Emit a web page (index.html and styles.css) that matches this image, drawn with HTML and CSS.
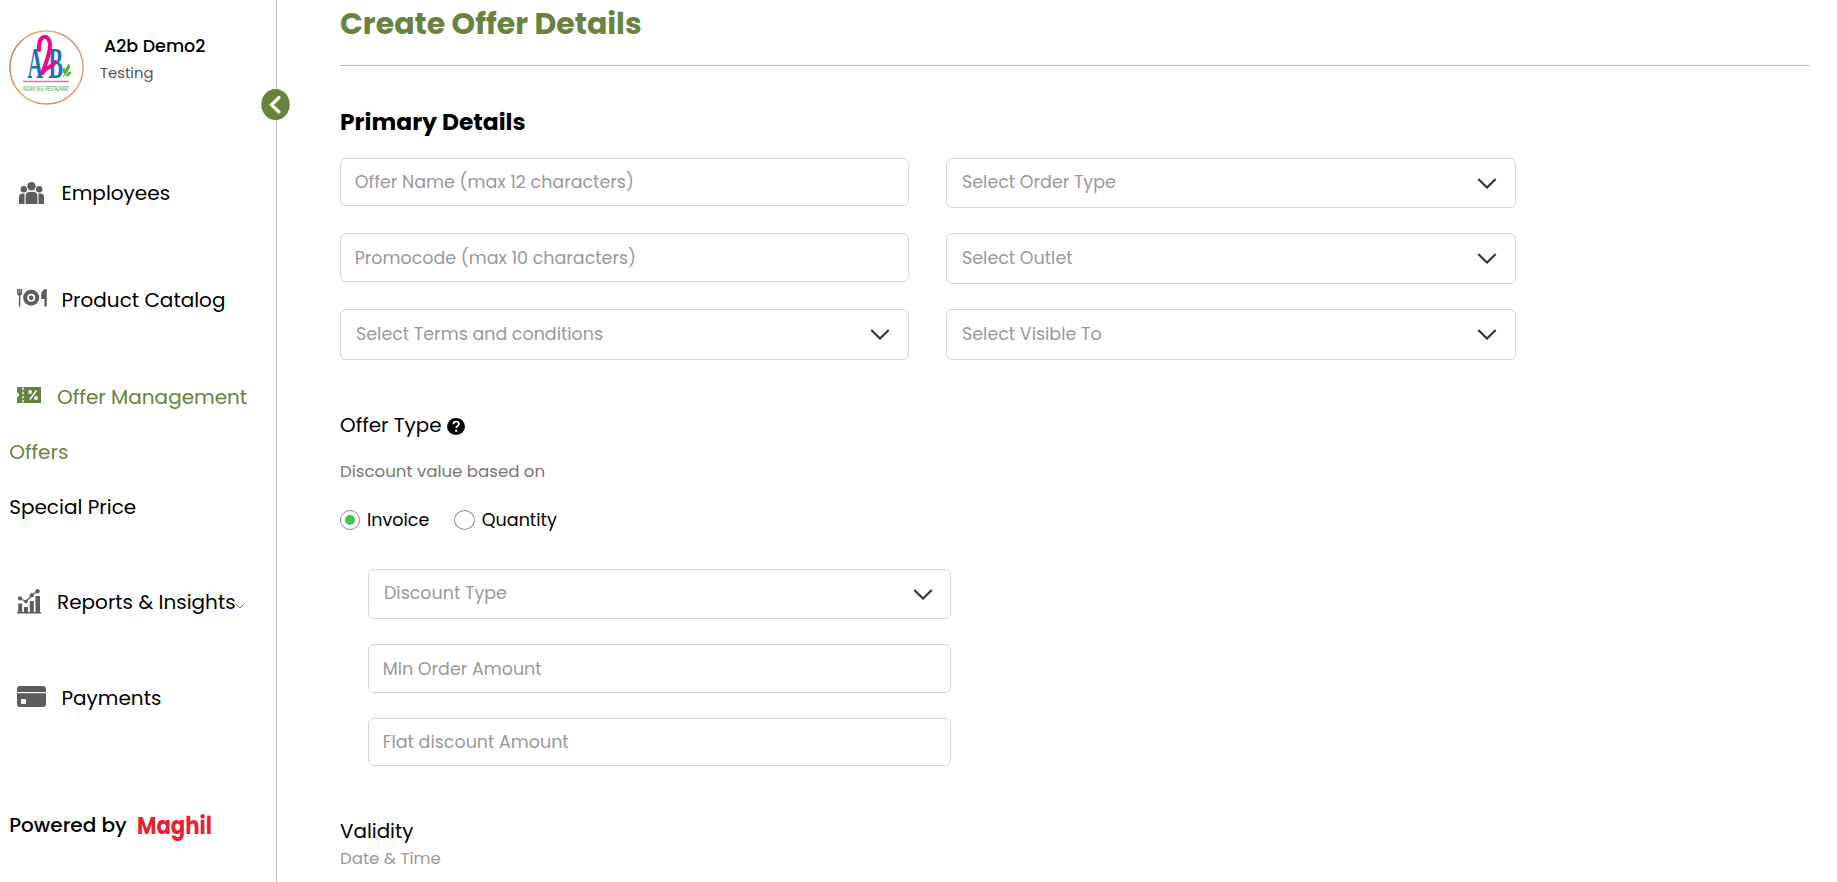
FILE: index.html
```
<!DOCTYPE html>
<html lang="en">
<head>
<meta charset="utf-8">
<title>Create Offer Details</title>
<link rel="stylesheet" href="styles.css">
</head>
<body>
<svg class="defs" width="0" height="0">
  <symbol id="chevron" viewBox="0 0 20 12"><path d="M1.3 1 10 9.6 18.7 1" fill="none" stroke="#333" stroke-width="2.1"/></symbol>
</svg>
<div class="app">
  <aside class="sidebar">
    <div class="profile">
      <svg class="avatar" viewBox="0 0 75 75" width="75" height="75">
        <defs><linearGradient id="gold" x1="0" y1="0" x2="1" y2="0.25"><stop offset="0" stop-color="#b9775c"/><stop offset=".45" stop-color="#e6bd79"/><stop offset=".75" stop-color="#cf8e62"/><stop offset="1" stop-color="#dca382"/></linearGradient></defs>
        <circle cx="37.5" cy="37.5" r="36.6" fill="#fff" stroke="url(#gold)" stroke-width="1.5"/>
        <text class="logo-serif" x="18.500" y="48" textLength="15.500" lengthAdjust="spacingAndGlyphs">A</text>
        <text class="logo-serif" x="39.500" y="48" textLength="14.500" lengthAdjust="spacingAndGlyphs">B</text>
        <path d="M30 20C29 4 40 3 41 14 41.500 24 36 34 33.500 43 36 37 40 40 46.500 32" fill="none" stroke="#f0058d" stroke-width="4" stroke-linecap="round" stroke-linejoin="round"/>
        <path d="M54 47Q58 43 61 36M56 44q-3-3-1-6 3 3 1 6M57 42q-1-4 3-8 1 5-3 8M57 46q1-4 5-4-1 4-5 4" fill="#6abf4b" stroke="#55a83a" stroke-width="1"/>
        <path d="M14 51.5H60" stroke="#d878a8" stroke-width="1.6"/>
        <text class="logo-caption" x="14" y="61" textLength="46" lengthAdjust="spacingAndGlyphs">INDIAN VEG. RESTAURANT</text>
      </svg>
      <div class="who"><div class="who-name">A2b Demo2</div><div class="who-role">Testing</div></div>
    </div>
    <button class="toggle" aria-label="Collapse"><svg viewBox="0 0 29 31" width="29" height="31"><ellipse cx="14.5" cy="15.5" rx="14.2" ry="15.4" fill="#67833e"/><path d="M18 8.5 10.5 15.8 18 23" fill="none" stroke="#fff" stroke-width="3.2" stroke-linecap="round"/></svg></button>
    <nav class="nav">
      <a class="item employees"><svg viewBox="0 0 25 22" width="25" height="22" fill="#5d5d5d"><circle cx="12.5" cy="4.2" r="4.2"/><circle cx="4.8" cy="7.3" r="3.2"/><circle cx="20.2" cy="7.3" r="3.2"/><path d="M6.600 22V14q0-4 4-4h3.800q4 0 4 4v8zM0 21V15q0-3.500 3.500-3.500h2Q5.500 12.500 5.500 14v8H1q-1 0-1-1M25 21V15q0-3.500-3.500-3.500h-2v10.500h4.500q1 0 1-1"/></svg><span>Employees</span></a>
      <a class="item catalog"><svg viewBox="0 0 30 18" width="30" height="18"><g fill="none" stroke="#5d5d5d"><path d="M.8 0v3.500q0 2.500 1.800 2.500t1.800-2.500V0M2.600 0v17.500" stroke-width="1.400"/><circle cx="14.200" cy="8.700" r="6" stroke-width="4"/></g><circle cx="14.200" cy="8.700" r="2.300" fill="#5d5d5d"/><path d="M29.800 0v17.500h-2.400V10H24.200V5.500Q25 0 29.800 0" fill="#5d5d5d"/></svg><span>Product Catalog</span></a>
      <a class="item offer green"><svg viewBox="0 0 24 16" width="24" height="16"><path d="M0 0h24v16H0V10a2.200 2.200 0 0 0 0-4.400z" fill="#67833e"/><path d="M6 .5v15" stroke="#fff" stroke-width="1.300" stroke-dasharray="2.500 1.700"/><path d="M19.500 3.500 12.800 12.500" stroke="#fff" stroke-width="1.500"/><circle cx="13.200" cy="5" r="1.900" fill="#fff"/><circle cx="19" cy="11" r="1.900" fill="#fff"/></svg><span>Offer Management</span></a>
      <a class="item sub green">Offers</a>
      <a class="item sub">Special Price</a>
      <a class="item reports"><svg viewBox="0 0 24 25" width="24" height="25"><path d="M0 23h24v1.500H0zM1.200 14.500h4V23h-4zM7 18h4v5H7zM12.800 12h4v11h-4zM18.500 7H23v16h-4.500z" fill="#5d5d5d"/><path d="M3 9.500 9 12.500 14.700 6.500 20.500 2" fill="none" stroke="#5d5d5d" stroke-width="1.300"/><g fill="#5d5d5d"><circle cx="3" cy="9.300" r="2.100"/><circle cx="9" cy="12.300" r="1.900"/><circle cx="14.700" cy="6.300" r="2.100"/><circle cx="20.500" cy="2.200" r="2.200"/></g></svg><span>Reports &amp; Insights</span><svg class="caret" viewBox="0 0 10 6" width="10" height="6"><path d="M.5.700 5 5 9.500.700" fill="none" stroke="#777" stroke-width="1"/></svg></a>
      <a class="item payments"><svg viewBox="0 0 29 21" width="29" height="21"><rect width="29" height="21" rx="3" fill="#5d5d5d"/><path d="M0 6.600h29" stroke="#fff" stroke-width="1.200"/><rect x="4" y="13" width="5" height="5" rx=".8" fill="#fff"/></svg><span>Payments</span></a>
    </nav>
    <div class="powered"><span>Powered by</span><svg width="80" height="40" viewBox="0 0 80 40"><text class="brand" x="0" y="28.500" textLength="75" lengthAdjust="spacingAndGlyphs">Maghil</text></svg></div>
  </aside>
  <main class="main">
    <h1 class="title">Create Offer Details</h1>
    <h2 class="heading">Primary Details</h2>
    <div class="grid">
      <div class="field f48">Offer Name (max 12 characters)</div>
      <div class="field select f50">Select Order Type<svg class="arrow"><use href="#chevron"/></svg></div>
      <div class="field f49">Promocode (max 10 characters)</div>
      <div class="field select">Select Outlet<svg class="arrow"><use href="#chevron"/></svg></div>
      <div class="field select">Select Terms and conditions<svg class="arrow"><use href="#chevron"/></svg></div>
      <div class="field select">Select Visible To<svg class="arrow"><use href="#chevron"/></svg></div>
    </div>
    <div class="offer-type"><span>Offer Type</span><svg viewBox="0 0 18 17" width="18" height="17"><ellipse cx="9" cy="8.500" rx="9" ry="8.500"/><path d="M6.300 6.300Q6.500 3.700 9.100 3.700 11.900 3.700 11.900 6 11.900 7.200 10.500 8 9.200 8.800 9.200 10" fill="none" stroke="#fff" stroke-width="1.800"/><circle cx="9.200" cy="12.700" r="1.200" fill="#fff"/></svg></div>
    <div class="basis">Discount value based on</div>
    <div class="radios">
      <label class="choice"><span class="radio on"></span>Invoice</label>
      <label class="choice"><span class="radio wide"></span>Quantity</label>
    </div>
    <div class="stack">
      <div class="field select f50">Discount Type<svg class="arrow"><use href="#chevron"/></svg></div>
      <div class="field f49">Min Order Amount</div>
      <div class="field f48">Flat discount Amount</div>
    </div>
    <div class="validity">Validity</div>
    <div class="datetime">Date &amp; Time</div>
  </main>
</div>
</body>
</html>
```
FILE: styles.css
```
* { box-sizing: border-box; }
body { margin: 0; background: #fff; color: #000; font-family: Poppins, Inter, sans-serif; overflow: hidden; }
.defs { position: absolute; }
svg { flex: none; display: block; }
.app { display: flex; height: 882px; }

.sidebar { position: relative; flex: none; width: 277px; border-right: 1px solid #bdbdbd; padding-top: 30px; }
.profile { display: flex; height: 148px; padding-left: 9px; }
.who { padding: 3px 0 0 16px; white-space: nowrap; }
.who-name { padding-left: 4px; font-size: 17.5px; font-weight: 500; line-height: 26px; }
.who-role { font-size: 14.8px; line-height: 26px; padding-top: 1px; color: #555; }
.logo-serif { font: bold 44px "Liberation Serif", serif; fill: #1673b9; }
.logo-caption { font: 8px "Liberation Sans", sans-serif; fill: #3c9650; }
.toggle { position: absolute; left: 261px; top: 89px; padding: 0; border: 0; background: none; }

.item { display: flex; align-items: center; height: 30px; font-size: 20px; line-height: 30px; white-space: nowrap; }
.green { color: #67833e; }
.employees { padding-left: 19px; gap: 17.5px; margin-bottom: 77px; }
.employees svg { margin-bottom: 1px; }
.catalog { padding-left: 17px; gap: 14.5px; margin-bottom: 67px; }
.catalog svg { margin-bottom: 4px; }
.offer { padding-left: 17px; gap: 16px; margin-bottom: 25px; }
.offer svg { margin-bottom: 4px; }
.sub { padding-left: 9.2px; margin-bottom: 25px; }
.reports { padding-left: 17px; gap: 16px; margin: 65px 0 66px; }
.reports svg { margin-bottom: 2px; }
.reports .caret { margin: 8px 0 0 -17px; }
.payments { padding-left: 17px; gap: 15.5px; }
.payments svg { margin-bottom: 3px; }
.powered { display: flex; align-items: center; gap: 10.5px; height: 30px; margin-top: 97px; padding-left: 9.2px; font-size: 20px; font-weight: 500; white-space: nowrap; }
.brand { font: 700 24px Poppins, Inter, sans-serif; fill: #e62232; }

.main { flex: 1; padding: 0 27px 0 63px; }
.title { height: 66px; margin: 0; border-bottom: 1px solid #bdbdbd; color: #67833e; font-size: 30px; font-weight: 700; line-height: 47px; }
.heading { margin: 39px 0 20px; font-size: 23.4px; font-weight: 700; line-height: 33px; }
.grid { display: grid; grid-template-columns: 569px 570px; grid-template-rows: 50px 51px 51px; column-gap: 37px; row-gap: 25px; align-items: start; }
.field { display: flex; align-items: center; height: 51px; padding: 0 13.7px; border: 1px solid #d6d6d6; border-radius: 6px; color: #999; font-size: 17.48px; white-space: nowrap; }
.select { justify-content: space-between; padding: 0 18px 2px 15px; }
.f48 { height: 48px; }
.f49 { height: 49px; }
.f50 { height: 50px; }
.arrow { width: 20px; height: 12px; margin-top: 3px; }
.offer-type { display: flex; align-items: center; gap: 5px; height: 30px; margin-top: 50px; font-size: 19.9px; }
.offer-type svg { margin-top: 3px; }
.basis { margin-top: 17px; font-size: 16.6px; line-height: 30px; color: #777; }
.radios { display: flex; gap: 24.5px; height: 30px; margin-top: 18px; font-size: 17.5px; line-height: 26px; }
.choice { display: flex; align-items: center; gap: 7px; }
.radio { display: flex; align-items: center; justify-content: center; width: 20px; height: 20px; border: 1px solid #8a8a8a; border-radius: 50%; }
.radio.wide { width: 21px; }
.radio.on::after { content: ""; width: 10px; height: 10px; border-radius: 50%; background: #40c452; }
.stack { display: flex; flex-direction: column; gap: 25px; width: 583px; margin: 34px 0 0 28px; }
.stack .select { padding-right: 17px; }
.validity { margin-top: 50px; font-size: 19.9px; line-height: 30px; }
.datetime { font-size: 16.6px; line-height: 25px; color: #999; }
```
